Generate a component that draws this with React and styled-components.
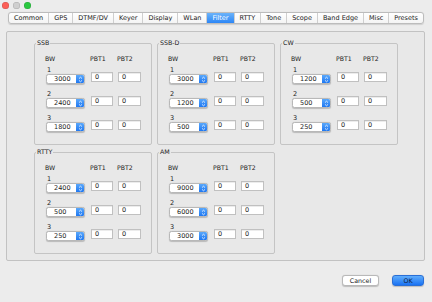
import React from "react";
import styled, { createGlobalStyle } from "styled-components";

const GlobalStyle = createGlobalStyle`
  html, body {
    margin: 0;
    padding: 0;
    background: #ececec;
  }
  body {
    font-family: "DejaVu Sans", "Liberation Sans", sans-serif;
    font-size: 6.5px;
    color: #1c1c1c;
  }
`;

const tabs = [
  "Common", "GPS", "DTMF/DV", "Keyer", "Display", "WLan", "Filter",
  "RTTY", "Tone", "Scope", "Band Edge", "Misc", "Presets",
];

const groups = [
  { name: "SSB", bw: ["3000", "2400", "1800"] },
  { name: "SSB-D", bw: ["3000", "1200", "500"] },
  { name: "CW", bw: ["1200", "500", "250"] },
  { name: "RTTY", bw: ["2400", "500", "250"] },
  { name: "AM", bw: ["9000", "6000", "3000"] },
];

const Window = styled.div`
  width: 432px;
  height: 302px;
  display: flex;
  flex-direction: column;
  background: #ececec;
  overflow: hidden;
`;

const TitleBar = styled.div`
  height: 11px;
  display: flex;
  align-items: center;
  gap: 4px;
  padding-left: 2px;
`;

const Light = styled.span`
  width: 7px;
  height: 7px;
  border-radius: 50%;
  background: ${(p) => p.color};
  box-shadow: inset 0 0 0 0.5px rgba(0, 0, 0, 0.18);
`;

const TabBar = styled.div`
  margin: 1px 8px 0 8px;
  height: 10px;
  display: flex;
  background: linear-gradient(#ffffff, #f4f4f4);
  border: 1px solid #bcbcbc;
  border-radius: 3px;
  box-shadow: 0 0.5px 1px rgba(0, 0, 0, 0.12);
  overflow: hidden;
`;

const Tab = styled.div`
  flex: 1 1 auto;
  display: flex;
  align-items: center;
  justify-content: center;
  padding: 0 4px;
  line-height: 10px;
  white-space: nowrap;
  color: ${(p) => (p.active ? "#ffffff" : "#1a1a1a")};
  background: ${(p) =>
    p.active ? "linear-gradient(#6cb3fa, #2c86f6)" : "transparent"};
  border-left: ${(p) => (p.first ? "none" : "1px solid #cfcfcf")};
`;

const Panel = styled.div`
  margin: 7px 7px 0 6px;
  border: 1px solid #c2c2c2;
  border-radius: 2px;
  background: #e8e8e8;
  padding: 7px 26px 6px 27px;
  display: grid;
  grid-template-columns: repeat(3, 118px);
  column-gap: 5px;
  row-gap: 3px;
`;

const Group = styled.fieldset`
  margin: 0;
  padding: 0;
  border: 1px solid #c4c4c4;
  border-radius: 2px;
  min-width: 0;
`;

const Legend = styled.legend`
  padding: 0 1px;
  margin-left: 1px;
  line-height: 8px;
  font-size: 6.3px;
`;

const Grid = styled.div`
  display: grid;
  grid-template-columns: 45px 27px 23px;
  padding: 8px 0 12px 11px;
  row-gap: 3px;
`;

const Head = styled.div`
  line-height: 8px;
  font-size: 6.2px;
  margin-left: -1px;
`;

const BwCell = styled.div`
  display: flex;
  flex-direction: column;
  margin-top: ${(p) => (p.first ? 0 : 3)}px;
`;

const Num = styled.div`
  line-height: 8px;
  margin-left: 1px;
`;

const Combo = styled.div`
  width: 39px;
  height: 10px;
  box-sizing: border-box;
  display: flex;
  background: #ffffff;
  border: 0.5px solid #b8b8b8;
  border-radius: 2.5px;
  box-shadow: 0 0.5px 1px rgba(0, 0, 0, 0.2);
  overflow: hidden;
`;

const ComboText = styled.span`
  flex: 1;
  padding-left: 7px;
  line-height: 9px;
`;

const Stepper = styled.span`
  width: 8px;
  display: flex;
  align-items: center;
  justify-content: center;
  background: linear-gradient(#5aa8fb, #1f78f2);
`;

const Field = styled.div`
  align-self: end;
  width: ${(p) => p.w}px;
  height: 10px;
  box-sizing: border-box;
  margin-bottom: 2px;
  background: #ffffff;
  border: 0.5px solid #c0c0c0;
  box-shadow: inset 0 0.5px 0.5px rgba(0, 0, 0, 0.15);
  padding-left: 3px;
  line-height: 9px;
`;

const Footer = styled.div`
  display: flex;
  justify-content: flex-end;
  gap: 13px;
  margin-top: 14px;
  padding-right: 8px;
`;

const Button = styled.div`
  width: ${(p) => p.w}px;
  height: 11px;
  box-sizing: border-box;
  border-radius: 3px;
  display: flex;
  align-items: center;
  justify-content: center;
  font-size: 6.3px;
  color: ${(p) => (p.primary ? "#0b1b3a" : "#1a1a1a")};
  background: ${(p) =>
    p.primary ? "linear-gradient(#5fadfc, #1a72f3)" : "#ffffff"};
  border: 0.5px solid ${(p) => (p.primary ? "#2a6fd6" : "#b9b9b9")};
  box-shadow: 0 0.5px 1px rgba(0, 0, 0, 0.2);
`;

function Arrows() {
  return (
    <svg width="5" height="7" viewBox="0 0 5 7">
      <path d="M1 2.6 L2.5 1.2 L4 2.6 M1 4.4 L2.5 5.8 L4 4.4" fill="none" stroke="#fff" strokeWidth="0.8" />
    </svg>
  );
}

function FilterGroup({ group }) {
  return (
    <Group>
      <Legend>{group.name}</Legend>
      <Grid>
        <Head>BW</Head>
        <Head>PBT1</Head>
        <Head>PBT2</Head>
        {group.bw.map((v, i) => (
          <React.Fragment key={i}>
            <BwCell first={i === 0}>
              <Num>{i + 1}</Num>
              <Combo>
                <ComboText>{v}</ComboText>
                <Stepper><Arrows /></Stepper>
              </Combo>
            </BwCell>
            <Field w={22}>0</Field>
            <Field w={23}>0</Field>
          </React.Fragment>
        ))}
      </Grid>
    </Group>
  );
}

export default function App() {
  return (
    <Window>
      <GlobalStyle />
      <TitleBar>
        <Light color="#fc5f57" />
        <Light color="#cfcfcf" />
        <Light color="#2ac840" />
      </TitleBar>
      <TabBar>
        {tabs.map((t, i) => (
          <Tab key={t} first={i === 0} active={t === "Filter"}>{t}</Tab>
        ))}
      </TabBar>
      <Panel>
        {groups.map((g) => (
          <FilterGroup key={g.name} group={g} />
        ))}
      </Panel>
      <Footer>
        <Button w={37}>Cancel</Button>
        <Button w={32} primary>OK</Button>
      </Footer>
    </Window>
  );
}
